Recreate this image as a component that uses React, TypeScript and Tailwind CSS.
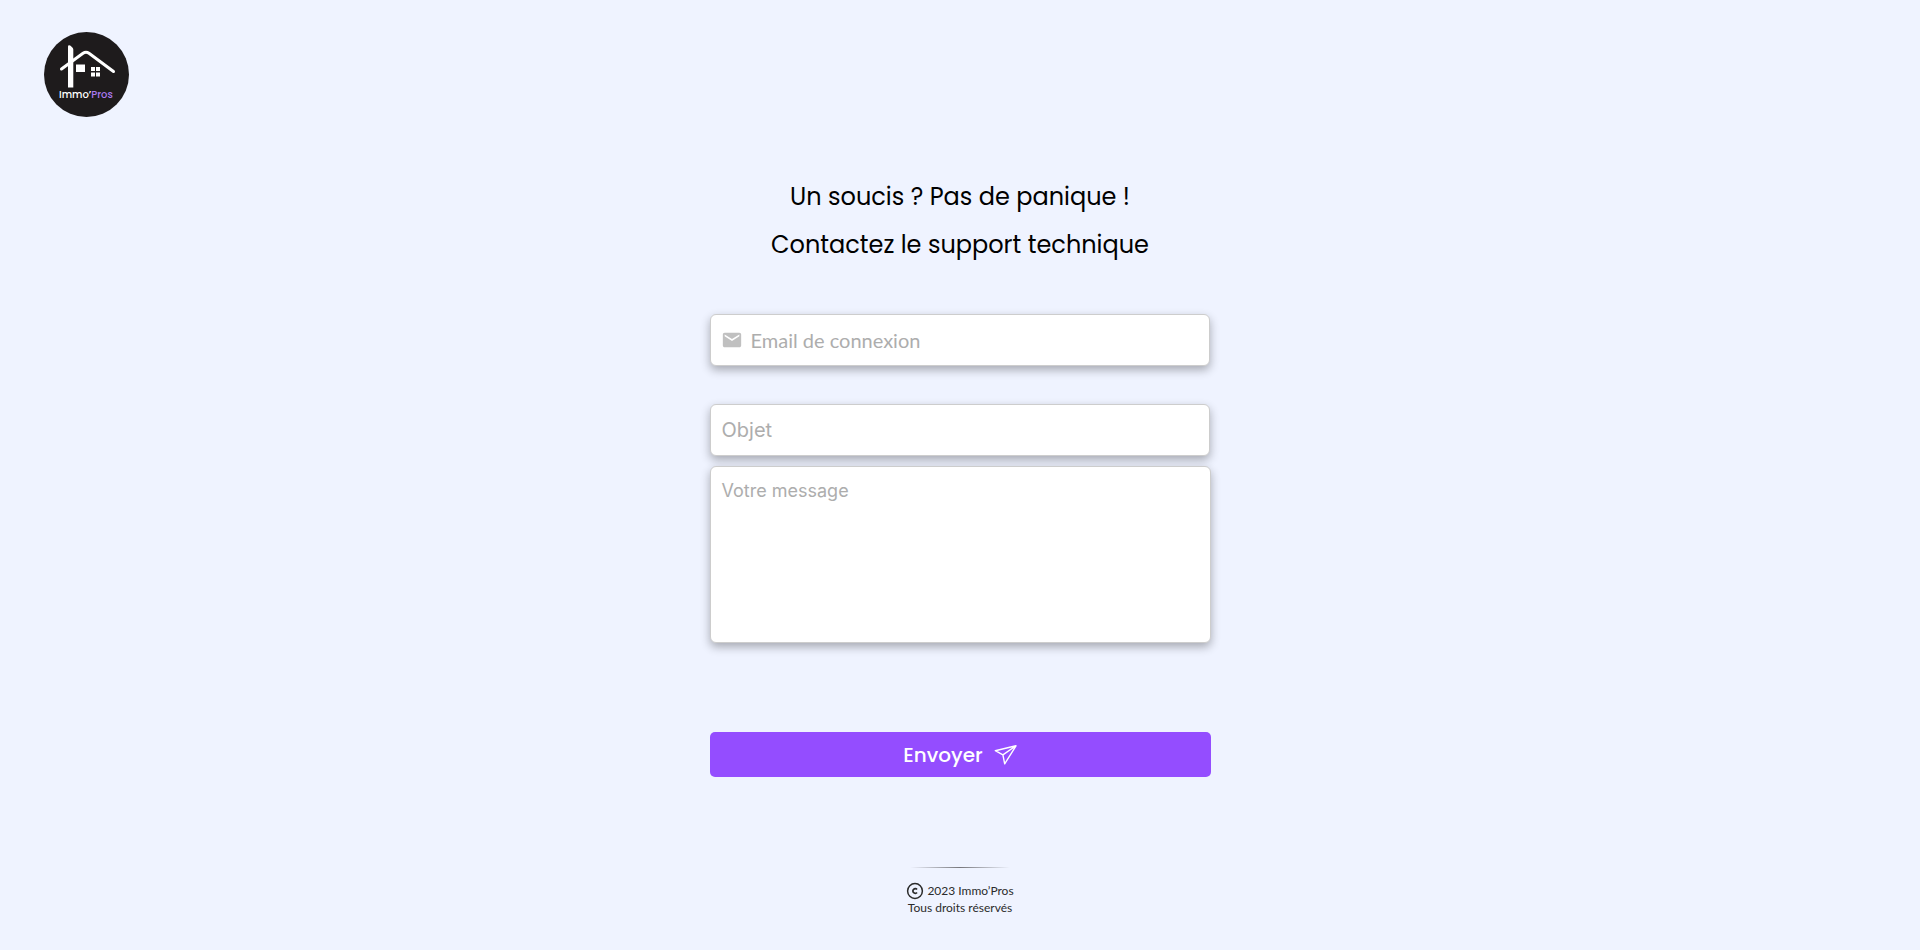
import React from "react";
import { MdEmail } from "react-icons/md";

function Logo() {
  return (
    <svg viewBox="0 0 85 85" className="size-[85px]" role="img" aria-label="Immo'Pros">
      <circle cx="42.5" cy="42.5" r="42.5" fill="#1e1b1c" />
      <g fill="#fff">
        <path d="M24 14.5c0-1.4 1.5-1.8 2.6-.8l1.7 1.7c.8.8 1 1.4 1 2.500V55.500H24z" />
        <path d="M32 32.500h9v7.500h-9z" />
        <path d="M47 35h4v4h-4zM52 35h4v4h-4zM47 40.500h4v4h-4zM52 40.500h4v4h-4z" />
      </g>
      <path d="M17.500 37 39 21.200q3-2 6 0L69.500 39.500" fill="none" stroke="#fff" strokeWidth="3" strokeLinecap="round" />
      <text x="15" y="66" fontSize="10" fill="#fff" className="font-['Poppins','Inter',sans-serif] font-medium">
        Immo’<tspan fill="#a979ee">Pros</tspan>
      </text>
    </svg>
  );
}

function PaperPlane() {
  return (
    <svg viewBox="4 4 23 22" className="h-[22px] w-[23px]" fill="none" stroke="currentColor" strokeWidth="1.4" strokeLinejoin="round" aria-hidden="true">
      <path d="M26 5.8 5.3 10.7l7.6 4.200 1.800 8.900zM12.900 14.900 26 5.800" />
    </svg>
  );
}

function Copyright() {
  return (
    <svg viewBox="0 0 18 18" className="size-[18px]" fill="none" stroke="currentColor" aria-hidden="true">
      <circle cx="9" cy="9" r="7.4" strokeWidth="1.5" />
      <path d="M11 7.6a2.3 2.3 0 1 0 0 2.8" strokeWidth="1.7" />
    </svg>
  );
}

const field =
  "rounded-md border border-[#cdcdcd] bg-white shadow-[0_4px_10px_rgba(0,0,0,0.3)] outline-none placeholder:text-[#adadad]";

export default function App() {
  return (
    <div className="flex min-h-screen flex-col bg-[#eff3ff] text-black">
      <header className="px-11 pt-8">
        <a href="#" className="inline-block align-top">
          <Logo />
        </a>
      </header>

      <main className="mx-auto flex w-full max-w-[501px] flex-1 flex-col pt-14">
        <h1 className="text-center font-['Poppins','Inter',sans-serif] text-2xl leading-[48px]">
          <span className="block">Un soucis ? Pas de panique !</span>
          <span className="block">Contactez le support technique</span>
        </h1>

        <form className="mt-[45px] flex flex-col">
          <label className={`${field} mr-px flex h-[52px] items-center gap-2 px-[10px]`}>
            <MdEmail className="size-[22px] text-[#c0c0c0]" />
            <input
              type="email"
              aria-label="Email de connexion"
              placeholder="Email de connexion"
              className="min-w-0 flex-1 font-['Lato',sans-serif] text-xl outline-none placeholder:text-[#adadad]"
            />
          </label>
          <input
            type="text"
            aria-label="Objet"
            placeholder="Objet"
            className={`${field} mt-[38px] mr-px h-[52px] px-[11px] font-['Inter',sans-serif] text-xl`}
          />
          <textarea
            aria-label="Votre message"
            placeholder="Votre message"
            className={`${field} mt-[10px] h-[177px] resize-none px-[11px] py-[10px] font-['Inter',sans-serif] text-lg`}
          />
          <button
            type="button"
            className="mt-[89px] flex h-[45px] items-center justify-center gap-[11px] rounded-[5px] bg-[#944dff] font-['Poppins','Inter',sans-serif] text-xl font-medium text-white"
          >
            Envoyer
            <PaperPlane />
          </button>
        </form>
      </main>

      <footer className="flex flex-col items-center pb-[34px] font-['Lato',sans-serif] text-xs leading-4 text-[#2b2b2b]">
        <div className="mb-[14px] h-px w-[100px] bg-linear-to-r from-transparent via-[#77777c] to-transparent" />
        <p className="flex items-center gap-[3px]">
          <Copyright />
          2023 Immo’Pros
        </p>
        <p>Tous droits réservés</p>
      </footer>
    </div>
  );
}
